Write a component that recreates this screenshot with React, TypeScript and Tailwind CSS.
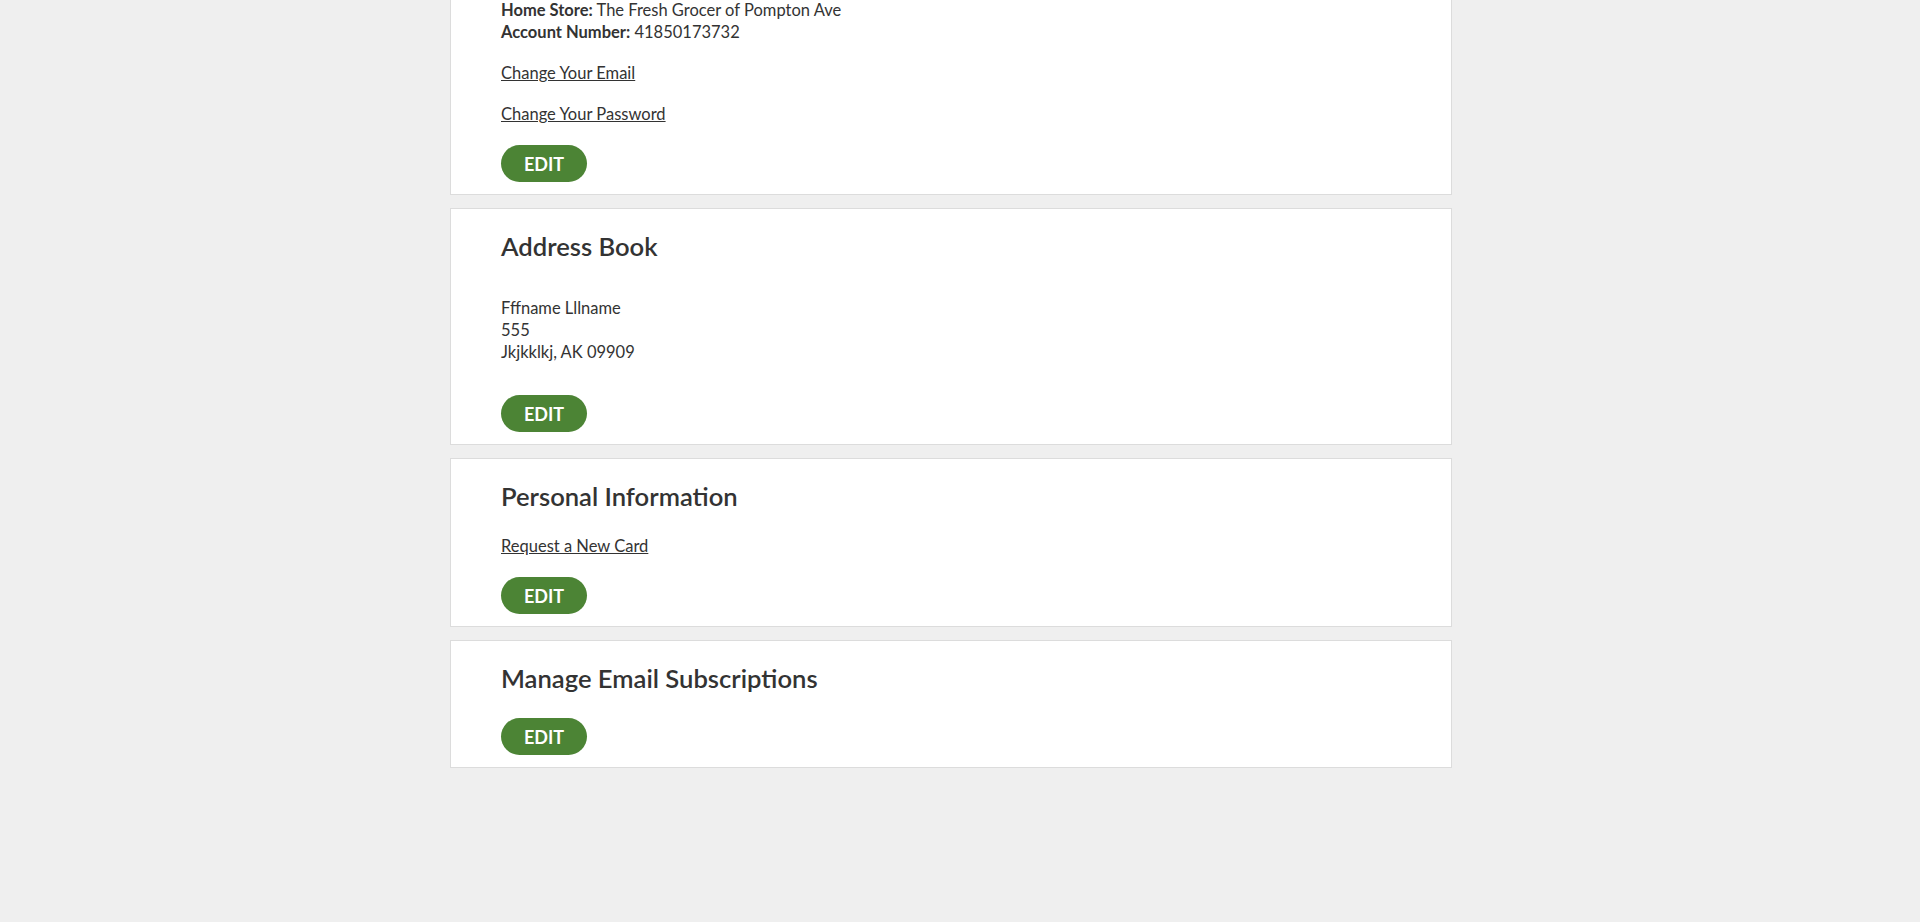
const font = "font-['Lato','Noto_Sans',sans-serif]";

function EditButton() {
  return (
    <button className="h-[37px] w-[86px] rounded-full bg-[#4c8435] text-[18px] font-bold leading-none text-white">
      EDIT
    </button>
  );
}

function Card({ children, first = false }: { children: React.ReactNode; first?: boolean }) {
  return (
    <section
      className={`mb-[13px] border border-[#dcdcdc] bg-white pb-[12px] pl-[50px] ${first ? 'border-t-0 pt-0' : 'pt-[20px]'}`}
    >
      {children}
    </section>
  );
}

function Heading({ children, className = '' }: { children: React.ReactNode; className?: string }) {
  return <h2 className={`text-[25.6px] font-semibold leading-[34px] text-[#333] ${className}`}>{children}</h2>;
}

export default function App() {
  return (
    <div className={`min-h-[923px] bg-[#efefef] ${font} text-[16.5px] leading-[22px] text-[#333]`}>
      <div className="ml-[450px] w-[1002px] -mt-px">
        {/* Account card (scrolled, top cut off) */}
        <Card first>
          <p>
            <span className="font-bold">Home Store:</span> The Fresh Grocer of Pompton Ave
          </p>
          <p>
            <span className="font-bold">Account Number:</span> 41850173732
          </p>
          <p className="mt-[19px]">
            <a href="#" className="underline">Change Your Email</a>
          </p>
          <p className="mt-[19px]">
            <a href="#" className="underline">Change Your Password</a>
          </p>
          <div className="mt-[20px]">
            <EditButton />
          </div>
        </Card>

        <Card>
          <Heading>Address Book</Heading>
          <div className="mt-[34px]">
            <p>Fffname Lllname</p>
            <p>555</p>
            <p>Jkjkklkj, AK 09909</p>
          </div>
          <div className="mt-[32px]">
            <EditButton />
          </div>
        </Card>

        <Card>
          <Heading>Personal Information</Heading>
          <p className="mt-[22px]">
            <a href="#" className="underline">Request a New Card</a>
          </p>
          <div className="mt-[20px]">
            <EditButton />
          </div>
        </Card>

        <Card>
          <Heading>Manage Email Subscriptions</Heading>
          <div className="mt-[23px]">
            <EditButton />
          </div>
        </Card>
      </div>
    </div>
  );
}
